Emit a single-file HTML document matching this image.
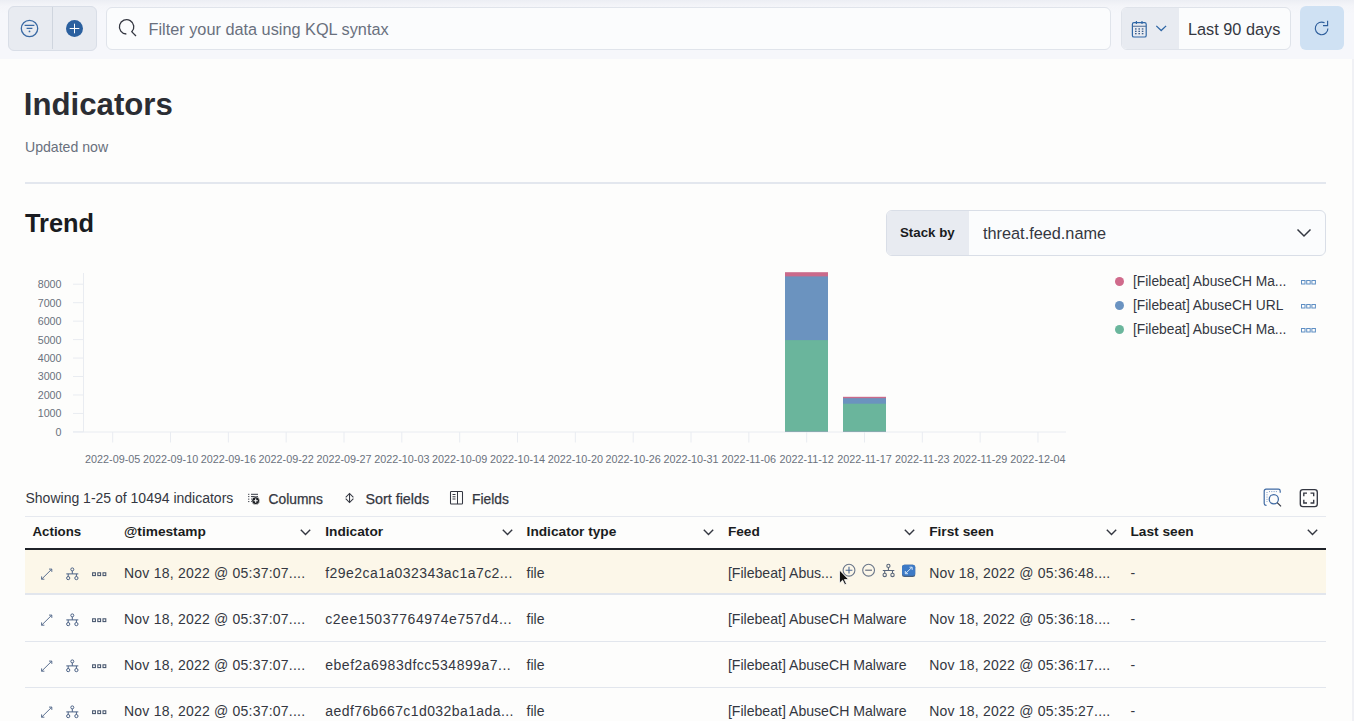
<!DOCTYPE html>
<html><head><meta charset="utf-8">
<style>
*{box-sizing:border-box;margin:0;padding:0}
html,body{width:1354px;height:721px;overflow:hidden;background:#fdfdfc;font-family:"Liberation Sans",sans-serif;color:#343741}
.abs{position:absolute}
.t{position:absolute;white-space:nowrap;line-height:1}
#topbar{position:absolute;left:0;top:0;width:1354px;height:59px;background:linear-gradient(#eceef4 0px,#f4f5f9 6px,#f6f7fb 14px)}
#btngrp{left:8px;top:6px;width:89px;height:45px;background:#e8ebf1;border:1px solid #d9dee7;border-radius:6px}
#btngrp .div{position:absolute;left:43px;top:0;width:1px;height:42px;background:#cfd5de}
#search{left:106px;top:7px;width:1005px;height:43px;background:#fbfcfd;border:1px solid #e0e4eb;border-radius:6px}
#datep{left:1121px;top:7px;width:170px;height:43px;background:#fbfcfd;border:1px solid #dfe3ea;border-radius:6px;overflow:hidden}
#datep .pre{position:absolute;left:0;top:0;width:57px;height:43px;background:#e8ebf1}
#refresh{left:1300px;top:6px;width:44px;height:44px;background:#cfe1f3;border-radius:6px}
#hr{left:25px;top:182px;width:1301px;height:2px;background:#e3e7ee}
#stack{left:886px;top:210px;width:440px;height:46px;background:#fbfcfd;border:1px solid #d9dee7;border-radius:6px;overflow:hidden}
#stack .pre{position:absolute;left:0;top:0;width:82px;height:46px;background:#e8ebf1}
.ldot{position:absolute;width:9px;height:9px;border-radius:50%}
</style></head>
<body>
<div id="topbar"></div>
<div id="btngrp" class="abs"><div class="div"></div>
  <svg class="abs" style="left:11.2px;top:11.6px" width="19" height="19" viewBox="0 0 19 19"><circle cx="9.5" cy="9.5" r="8.2" fill="none" stroke="#3a6aa4" stroke-width="1.3"/><path d="M4.6 6.4h9.8M6.6 9.4h5.8" stroke="#3a6aa4" stroke-width="1.2"/><circle cx="9.5" cy="12.4" r="0.9" fill="#3a6aa4"/></svg>
  <svg class="abs" style="left:55.8px;top:11.6px" width="19" height="19" viewBox="0 0 19 19"><circle cx="9.5" cy="9.5" r="8.5" fill="#2b609f"/><path d="M9.5 4.7v9.6M4.7 9.5h9.6" stroke="#fff" stroke-width="1"/></svg>
</div>
<div id="search" class="abs">
  <svg class="abs" style="left:0;top:0" width="40" height="40" viewBox="0 0 40 40"><path d="M24.78 23.80A7.2 7.2 0 1 0 19.35 26.00" fill="none" stroke="#343741" stroke-width="1.3"/><path d="M24.38 23.40L28.98 28.00" stroke="#343741" stroke-width="1.3"/></svg>
  <div class="t" style="left:41.5px;top:13px;font-size:16.3px;color:#69707d">Filter your data using KQL syntax</div>
</div>
<div id="datep" class="abs"><div class="pre"></div>
  <svg class="abs" style="left:0;top:0" width="56" height="43" viewBox="1122 8 56 43"><rect x="1132.4" y="22.6" width="13.8" height="14.4" rx="1.6" fill="none" stroke="#2f67a6" stroke-width="1.2"/><path d="M1132.4 26.3h13.8" stroke="#4a6a94" stroke-width="1.1"/><path d="M1136.4 21v3M1142 21v3" stroke="#2f67a6" stroke-width="1.2"/><g fill="#3d5f8d"><rect x="1135" y="28.3" width="1.6" height="1.3"/><rect x="1138.4" y="28.3" width="1.6" height="1.3"/><rect x="1141.8" y="28.3" width="1.6" height="1.3"/><rect x="1135" y="30.7" width="1.6" height="1.3"/><rect x="1138.4" y="30.7" width="1.6" height="1.3"/><rect x="1141.8" y="30.7" width="1.6" height="1.3"/><rect x="1135" y="33" width="1.6" height="1.3"/><rect x="1138.4" y="33" width="1.6" height="1.3"/><rect x="1141.8" y="33" width="1.6" height="1.3"/></g>
<path d="M1156.3 25.9l4.9 4.6 4.9-4.6" fill="none" stroke="#2f67a6" stroke-width="1.3"/></svg>
  <div class="t" style="left:66px;top:13px;font-size:16.3px;color:#343741">Last 90 days</div>
</div>
<div id="refresh" class="abs">
  <svg class="abs" style="left:0;top:0" width="44" height="44" viewBox="1300 6 44 44"><path d="M1327.90 28.40A6.3 6.3 0 1 1 1324.56 22.84" fill="none" stroke="#2f5f9c" stroke-width="1.15"/><path d="M1327.6 20.8v4.8h-4.6" fill="none" stroke="#2f5f9c" stroke-width="1.15"/></svg>
</div>

<div class="t" style="left:23.8px;top:89px;font-size:31.2px;font-weight:700;color:#2b2d33">Indicators</div>
<div class="t" style="left:25px;top:140px;font-size:14.1px;color:#69707d">Updated now</div>
<div id="hr" class="abs"></div>
<div class="t" style="left:25px;top:211px;font-size:25.4px;font-weight:700;color:#1a1c21">Trend</div>

<div id="stack" class="abs"><div class="pre"></div>
  <div class="t" style="left:13px;top:14.5px;font-size:13.3px;font-weight:700;color:#1a1c21">Stack by</div>
  <div class="t" style="left:96px;top:14px;font-size:16.3px;color:#343741">threat.feed.name</div>
  <svg class="abs" style="left:409px;top:17px" width="16" height="10" viewBox="0 0 16 10"><path d="M1.5 1.5l6.5 6.5 6.5-6.5" fill="none" stroke="#343741" stroke-width="1.5"/></svg>
</div>

<!-- legend -->
<div class="ldot" style="left:1115px;top:277px;background:#d06a8b"></div>
<div class="ldot" style="left:1115px;top:301px;background:#6a93c1"></div>
<div class="ldot" style="left:1115px;top:325px;background:#6ab69c"></div>
<div class="t" style="left:1133px;top:274.5px;font-size:13.8px;color:#343741">[Filebeat] AbuseCH Ma...</div>
<div class="t" style="left:1133px;top:298.5px;font-size:13.8px;color:#343741">[Filebeat] AbuseCH URL</div>
<div class="t" style="left:1133px;top:322.5px;font-size:13.8px;color:#343741">[Filebeat] AbuseCH Ma...</div>
<svg class="abs" style="left:1301px;top:280px" width="15" height="5" viewBox="0 0 15 5"><g fill="none" stroke="#5f8fc4" stroke-width="1"><rect x="0.5" y="0.5" width="3.5" height="3.5"/><rect x="5.7" y="0.5" width="3.5" height="3.5"/><rect x="10.9" y="0.5" width="3.5" height="3.5"/></g></svg>
<svg class="abs" style="left:1301px;top:304px" width="15" height="5" viewBox="0 0 15 5"><g fill="none" stroke="#5f8fc4" stroke-width="1"><rect x="0.5" y="0.5" width="3.5" height="3.5"/><rect x="5.7" y="0.5" width="3.5" height="3.5"/><rect x="10.9" y="0.5" width="3.5" height="3.5"/></g></svg>
<svg class="abs" style="left:1301px;top:328px" width="15" height="5" viewBox="0 0 15 5"><g fill="none" stroke="#5f8fc4" stroke-width="1"><rect x="0.5" y="0.5" width="3.5" height="3.5"/><rect x="5.7" y="0.5" width="3.5" height="3.5"/><rect x="10.9" y="0.5" width="3.5" height="3.5"/></g></svg>

<!-- CHART -->
<div id="chart"><svg class="abs" style="left:0;top:260px" width="1100" height="215" viewBox="0 260 1100 215" font-family="Liberation Sans" >
<line x1="73" y1="431.90" x2="83.5" y2="431.90" stroke="#e9ecf1" stroke-width="1"/>
<text x="61.5" y="435.80" text-anchor="end" font-size="10.7" fill="#6a717d">0</text>
<line x1="73" y1="413.44" x2="83.5" y2="413.44" stroke="#e9ecf1" stroke-width="1"/>
<text x="61.5" y="417.34" text-anchor="end" font-size="10.7" fill="#6a717d">1000</text>
<line x1="73" y1="394.98" x2="83.5" y2="394.98" stroke="#e9ecf1" stroke-width="1"/>
<text x="61.5" y="398.88" text-anchor="end" font-size="10.7" fill="#6a717d">2000</text>
<line x1="73" y1="376.52" x2="83.5" y2="376.52" stroke="#e9ecf1" stroke-width="1"/>
<text x="61.5" y="380.42" text-anchor="end" font-size="10.7" fill="#6a717d">3000</text>
<line x1="73" y1="358.06" x2="83.5" y2="358.06" stroke="#e9ecf1" stroke-width="1"/>
<text x="61.5" y="361.96" text-anchor="end" font-size="10.7" fill="#6a717d">4000</text>
<line x1="73" y1="339.60" x2="83.5" y2="339.60" stroke="#e9ecf1" stroke-width="1"/>
<text x="61.5" y="343.50" text-anchor="end" font-size="10.7" fill="#6a717d">5000</text>
<line x1="73" y1="321.14" x2="83.5" y2="321.14" stroke="#e9ecf1" stroke-width="1"/>
<text x="61.5" y="325.04" text-anchor="end" font-size="10.7" fill="#6a717d">6000</text>
<line x1="73" y1="302.68" x2="83.5" y2="302.68" stroke="#e9ecf1" stroke-width="1"/>
<text x="61.5" y="306.58" text-anchor="end" font-size="10.7" fill="#6a717d">7000</text>
<line x1="73" y1="284.22" x2="83.5" y2="284.22" stroke="#e9ecf1" stroke-width="1"/>
<text x="61.5" y="288.12" text-anchor="end" font-size="10.7" fill="#6a717d">8000</text>
<line x1="83.5" y1="273" x2="83.5" y2="432" stroke="#e9ecf1" stroke-width="1"/>
<line x1="73" y1="432" x2="1066" y2="432" stroke="#e9ecf1" stroke-width="1"/>
<line x1="112.70" y1="432" x2="112.70" y2="442.5" stroke="#e9ecf1" stroke-width="1"/>
<text x="112.70" y="462.8" text-anchor="middle" font-size="10.8" fill="#6a717d">2022-09-05</text>
<line x1="170.53" y1="432" x2="170.53" y2="442.5" stroke="#e9ecf1" stroke-width="1"/>
<text x="170.53" y="462.8" text-anchor="middle" font-size="10.8" fill="#6a717d">2022-09-10</text>
<line x1="228.36" y1="432" x2="228.36" y2="442.5" stroke="#e9ecf1" stroke-width="1"/>
<text x="228.36" y="462.8" text-anchor="middle" font-size="10.8" fill="#6a717d">2022-09-16</text>
<line x1="286.19" y1="432" x2="286.19" y2="442.5" stroke="#e9ecf1" stroke-width="1"/>
<text x="286.19" y="462.8" text-anchor="middle" font-size="10.8" fill="#6a717d">2022-09-22</text>
<line x1="344.02" y1="432" x2="344.02" y2="442.5" stroke="#e9ecf1" stroke-width="1"/>
<text x="344.02" y="462.8" text-anchor="middle" font-size="10.8" fill="#6a717d">2022-09-27</text>
<line x1="401.85" y1="432" x2="401.85" y2="442.5" stroke="#e9ecf1" stroke-width="1"/>
<text x="401.85" y="462.8" text-anchor="middle" font-size="10.8" fill="#6a717d">2022-10-03</text>
<line x1="459.68" y1="432" x2="459.68" y2="442.5" stroke="#e9ecf1" stroke-width="1"/>
<text x="459.68" y="462.8" text-anchor="middle" font-size="10.8" fill="#6a717d">2022-10-09</text>
<line x1="517.51" y1="432" x2="517.51" y2="442.5" stroke="#e9ecf1" stroke-width="1"/>
<text x="517.51" y="462.8" text-anchor="middle" font-size="10.8" fill="#6a717d">2022-10-14</text>
<line x1="575.34" y1="432" x2="575.34" y2="442.5" stroke="#e9ecf1" stroke-width="1"/>
<text x="575.34" y="462.8" text-anchor="middle" font-size="10.8" fill="#6a717d">2022-10-20</text>
<line x1="633.17" y1="432" x2="633.17" y2="442.5" stroke="#e9ecf1" stroke-width="1"/>
<text x="633.17" y="462.8" text-anchor="middle" font-size="10.8" fill="#6a717d">2022-10-26</text>
<line x1="691.00" y1="432" x2="691.00" y2="442.5" stroke="#e9ecf1" stroke-width="1"/>
<text x="691.00" y="462.8" text-anchor="middle" font-size="10.8" fill="#6a717d">2022-10-31</text>
<line x1="748.83" y1="432" x2="748.83" y2="442.5" stroke="#e9ecf1" stroke-width="1"/>
<text x="748.83" y="462.8" text-anchor="middle" font-size="10.8" fill="#6a717d">2022-11-06</text>
<line x1="806.66" y1="432" x2="806.66" y2="442.5" stroke="#e9ecf1" stroke-width="1"/>
<text x="806.66" y="462.8" text-anchor="middle" font-size="10.8" fill="#6a717d">2022-11-12</text>
<line x1="864.49" y1="432" x2="864.49" y2="442.5" stroke="#e9ecf1" stroke-width="1"/>
<text x="864.49" y="462.8" text-anchor="middle" font-size="10.8" fill="#6a717d">2022-11-17</text>
<line x1="922.32" y1="432" x2="922.32" y2="442.5" stroke="#e9ecf1" stroke-width="1"/>
<text x="922.32" y="462.8" text-anchor="middle" font-size="10.8" fill="#6a717d">2022-11-23</text>
<line x1="980.15" y1="432" x2="980.15" y2="442.5" stroke="#e9ecf1" stroke-width="1"/>
<text x="980.15" y="462.8" text-anchor="middle" font-size="10.8" fill="#6a717d">2022-11-29</text>
<line x1="1037.98" y1="432" x2="1037.98" y2="442.5" stroke="#e9ecf1" stroke-width="1"/>
<text x="1037.98" y="462.8" text-anchor="middle" font-size="10.8" fill="#6a717d">2022-12-04</text>
<rect x="785" y="272.2" width="43" height="159.3" fill="#ca6a8b"/><rect x="785" y="276.4" width="43" height="155.10000000000002" fill="#6b93bf"/><rect x="785" y="340.1" width="43" height="91.39999999999998" fill="#6ab59c"/>
<rect x="843" y="396.8" width="43" height="34.69999999999999" fill="#ca6a8b"/><rect x="843" y="398.2" width="43" height="33.30000000000001" fill="#6b93bf"/><rect x="843" y="403.7" width="43" height="27.80000000000001" fill="#6ab59c"/>
</svg></div>

<!-- TABLE -->
<div id="table"><div class="t" style="left:25.5px;top:490.7px;font-size:14px;color:#343741">Showing 1-25 of 10494 indicators</div>
<svg class="abs" style="left:242px;top:486px" width="24" height="22" viewBox="242 486 24 22"><g fill="#343741"><rect x="248.2" y="493.8" width="1.1" height="1.1"/><rect x="248.2" y="496" width="1.1" height="1.1"/><rect x="248.2" y="498.6" width="1.1" height="1.1"/><rect x="248.2" y="501" width="1.1" height="1.1"/></g><path d="M251 494.3h7M251 496.6h7M251 499.1h2M251 501.5h1" stroke="#343741" stroke-width="1"/><circle cx="255.7" cy="500.7" r="3.9" fill="#1a1c21" stroke="#fdfdfc" stroke-width="0.6"/><path d="M255.7 498.6v4.2M253.6 500.7h4.2" stroke="#fff" stroke-width="1.1"/></svg>
<div class="t" style="left:268.5px;top:492.5px;font-size:13.8px;color:#343741;-webkit-text-stroke:0.25px #343741">Columns</div>
<svg class="abs" style="left:340px;top:486px" width="20" height="22" viewBox="340 486 20 22"><path d="M345.7 497.3l3.85-3.85 3.85 3.85M345.7 498.7l3.85 3.85 3.85-3.85M349.55 494v8" fill="none" stroke="#343741" stroke-width="1.05"/></svg>
<div class="t" style="left:365.5px;top:491.6px;font-size:14.3px;color:#343741;-webkit-text-stroke:0.25px #343741">Sort fields</div>
<svg class="abs" style="left:446px;top:486px" width="20" height="22" viewBox="446 486 20 22"><rect x="450.5" y="491.5" width="12" height="12.5" rx="0.8" fill="none" stroke="#343741" stroke-width="1.05"/><path d="M457.5 491.5v12.5M452.5 494.5h3M452.5 496.8h3M452.5 499h3" stroke="#343741" stroke-width="1"/></svg>
<div class="t" style="left:472px;top:492.5px;font-size:13.8px;color:#343741;-webkit-text-stroke:0.25px #343741">Fields</div>
<svg class="abs" style="left:1263px;top:488px" width="20" height="20" viewBox="0 0 20 20"><path d="M3.5 17.3H3a1.8 1.8 0 0 1-1.8-1.8V3A1.8 1.8 0 0 1 3 1.2h12.4A1.8 1.8 0 0 1 17.2 3v1.8" fill="none" stroke="#3f6aa3" stroke-width="1.2"/><path d="M4 4v10M6 3.6h9" stroke="#6d8fbf" stroke-width="0.9" stroke-dasharray="1 1.3"/><circle cx="10.8" cy="11.2" r="4.6" fill="none" stroke="#3f6aa3" stroke-width="1.25"/><path d="M14.2 14.6l3.8 3.8" stroke="#343741" stroke-width="1.25"/></svg>
<svg class="abs" style="left:1299px;top:488px" width="20" height="20" viewBox="0 0 20 20"><rect x="1.3" y="1.6" width="17" height="17" rx="2.6" fill="none" stroke="#343741" stroke-width="1.35"/><path d="M4.8 8.3V5.1H8M11.5 5.1h3.2v3.2M14.7 11.8v3.2h-3.2M8 15H4.8v-3.2" fill="none" stroke="#343741" stroke-width="1.35"/></svg>
<div class="abs" style="left:25px;top:515.5px;width:1301px;height:1.5px;background:#e6e9ef"></div>
<div class="abs" style="left:25px;top:547.5px;width:1301px;height:2px;background:#1f2228"></div>
<div class="t" style="left:32.5px;top:525px;font-size:13.3px;font-weight:700;color:#1a1c21">Actions</div>
<div class="t" style="left:124.0px;top:525px;font-size:13.7px;font-weight:700;color:#1a1c21">@timestamp</div>
<svg class="abs" style="left:300.4px;top:529px" width="11" height="7" viewBox="0 0 11 7"><path d="M0.8 0.8l4.7 4.7 4.7-4.7" fill="none" stroke="#343741" stroke-width="1.4"/></svg>
<div class="t" style="left:325.3px;top:525px;font-size:13.7px;font-weight:700;color:#1a1c21">Indicator</div>
<svg class="abs" style="left:501.7px;top:529px" width="11" height="7" viewBox="0 0 11 7"><path d="M0.8 0.8l4.7 4.7 4.7-4.7" fill="none" stroke="#343741" stroke-width="1.4"/></svg>
<div class="t" style="left:526.6px;top:525px;font-size:13.7px;font-weight:700;color:#1a1c21">Indicator type</div>
<svg class="abs" style="left:703.0px;top:529px" width="11" height="7" viewBox="0 0 11 7"><path d="M0.8 0.8l4.7 4.7 4.7-4.7" fill="none" stroke="#343741" stroke-width="1.4"/></svg>
<div class="t" style="left:727.9px;top:525px;font-size:13.7px;font-weight:700;color:#1a1c21">Feed</div>
<svg class="abs" style="left:904.3px;top:529px" width="11" height="7" viewBox="0 0 11 7"><path d="M0.8 0.8l4.7 4.7 4.7-4.7" fill="none" stroke="#343741" stroke-width="1.4"/></svg>
<div class="t" style="left:929.2px;top:525px;font-size:13.7px;font-weight:700;color:#1a1c21">First seen</div>
<svg class="abs" style="left:1105.6px;top:529px" width="11" height="7" viewBox="0 0 11 7"><path d="M0.8 0.8l4.7 4.7 4.7-4.7" fill="none" stroke="#343741" stroke-width="1.4"/></svg>
<div class="t" style="left:1130.5px;top:525px;font-size:13.7px;font-weight:700;color:#1a1c21">Last seen</div>
<svg class="abs" style="left:1306.9px;top:529px" width="11" height="7" viewBox="0 0 11 7"><path d="M0.8 0.8l4.7 4.7 4.7-4.7" fill="none" stroke="#343741" stroke-width="1.4"/></svg>
<div class="abs" style="left:25px;top:549.5px;width:1301px;height:44px;background:#fcf7e9"></div>
<div class="abs" style="left:25px;top:593px;width:1301px;height:2px;background:#e2e6ed"></div>
<div class="abs" style="left:25px;top:641px;width:1301px;height:1px;background:#e2e6ed"></div>
<div class="abs" style="left:25px;top:687px;width:1301px;height:1px;background:#e2e6ed"></div>
<svg class="abs" style="left:39px;top:565.7px" width="70" height="16" viewBox="0 0 70 16">
<path d="M2.6 13.2L12.8 3.1M2.6 10.4v2.8h2.8M10 3.1h2.8v2.8" fill="none" stroke="#5a6f8f" stroke-width="1"/>
<g fill="none" stroke="#4b6185" stroke-width="1"><circle cx="33.3" cy="3.4" r="1.5"/><path d="M27.3 7.9h12M33.3 4.9v3"/><circle cx="29.2" cy="12.1" r="1.6"/><circle cx="37.4" cy="12.1" r="1.6"/><path d="M29.2 7.9v2.6M37.4 7.9v2.6"/></g>
<g fill="none" stroke="#44536b" stroke-width="1.05"><rect x="53.6" y="6.8" width="2.8" height="2.8"/><rect x="58.8" y="6.8" width="2.8" height="2.8"/><rect x="64" y="6.8" width="2.8" height="2.8"/></g>
</svg>
<div class="t" style="left:124.0px;top:565.75px;font-size:14px;color:#343741;letter-spacing:0.22px;">Nov 18, 2022 @ 05:37:07....</div>
<div class="t" style="left:325.3px;top:565.75px;font-size:14px;color:#343741;letter-spacing:0.43px;">f29e2ca1a032343ac1a7c2...</div>
<div class="t" style="left:526.6px;top:565.75px;font-size:14px;color:#343741;">file</div>
<div class="t" style="left:727.9px;top:565.75px;font-size:14.1px;color:#343741;">[Filebeat] Abus...</div>
<div class="t" style="left:929.2px;top:565.75px;font-size:14px;color:#343741;letter-spacing:0.22px;">Nov 18, 2022 @ 05:36:48....</div>
<div class="t" style="left:1130.5px;top:565.75px;font-size:14px;color:#343741;">-</div>
<svg class="abs" style="left:39px;top:612.1px" width="70" height="16" viewBox="0 0 70 16">
<path d="M2.6 13.2L12.8 3.1M2.6 10.4v2.8h2.8M10 3.1h2.8v2.8" fill="none" stroke="#5a6f8f" stroke-width="1"/>
<g fill="none" stroke="#4b6185" stroke-width="1"><circle cx="33.3" cy="3.4" r="1.5"/><path d="M27.3 7.9h12M33.3 4.9v3"/><circle cx="29.2" cy="12.1" r="1.6"/><circle cx="37.4" cy="12.1" r="1.6"/><path d="M29.2 7.9v2.6M37.4 7.9v2.6"/></g>
<g fill="none" stroke="#44536b" stroke-width="1.05"><rect x="53.6" y="6.8" width="2.8" height="2.8"/><rect x="58.8" y="6.8" width="2.8" height="2.8"/><rect x="64" y="6.8" width="2.8" height="2.8"/></g>
</svg>
<div class="t" style="left:124.0px;top:612.15px;font-size:14px;color:#343741;letter-spacing:0.22px;">Nov 18, 2022 @ 05:37:07....</div>
<div class="t" style="left:325.3px;top:612.15px;font-size:14px;color:#343741;letter-spacing:0.52px;">c2ee15037764974e757d4...</div>
<div class="t" style="left:526.6px;top:612.15px;font-size:14px;color:#343741;">file</div>
<div class="t" style="left:727.9px;top:612.15px;font-size:14.1px;color:#343741;">[Filebeat] AbuseCH Malware</div>
<div class="t" style="left:929.2px;top:612.15px;font-size:14px;color:#343741;letter-spacing:0.22px;">Nov 18, 2022 @ 05:36:18....</div>
<div class="t" style="left:1130.5px;top:612.15px;font-size:14px;color:#343741;">-</div>
<svg class="abs" style="left:39px;top:658.1px" width="70" height="16" viewBox="0 0 70 16">
<path d="M2.6 13.2L12.8 3.1M2.6 10.4v2.8h2.8M10 3.1h2.8v2.8" fill="none" stroke="#5a6f8f" stroke-width="1"/>
<g fill="none" stroke="#4b6185" stroke-width="1"><circle cx="33.3" cy="3.4" r="1.5"/><path d="M27.3 7.9h12M33.3 4.9v3"/><circle cx="29.2" cy="12.1" r="1.6"/><circle cx="37.4" cy="12.1" r="1.6"/><path d="M29.2 7.9v2.6M37.4 7.9v2.6"/></g>
<g fill="none" stroke="#44536b" stroke-width="1.05"><rect x="53.6" y="6.8" width="2.8" height="2.8"/><rect x="58.8" y="6.8" width="2.8" height="2.8"/><rect x="64" y="6.8" width="2.8" height="2.8"/></g>
</svg>
<div class="t" style="left:124.0px;top:658.15px;font-size:14px;color:#343741;letter-spacing:0.22px;">Nov 18, 2022 @ 05:37:07....</div>
<div class="t" style="left:325.3px;top:658.15px;font-size:14px;color:#343741;letter-spacing:0.49px;">ebef2a6983dfcc534899a7...</div>
<div class="t" style="left:526.6px;top:658.15px;font-size:14px;color:#343741;">file</div>
<div class="t" style="left:727.9px;top:658.15px;font-size:14.1px;color:#343741;">[Filebeat] AbuseCH Malware</div>
<div class="t" style="left:929.2px;top:658.15px;font-size:14px;color:#343741;letter-spacing:0.22px;">Nov 18, 2022 @ 05:36:17....</div>
<div class="t" style="left:1130.5px;top:658.15px;font-size:14px;color:#343741;">-</div>
<svg class="abs" style="left:39px;top:704.1px" width="70" height="16" viewBox="0 0 70 16">
<path d="M2.6 13.2L12.8 3.1M2.6 10.4v2.8h2.8M10 3.1h2.8v2.8" fill="none" stroke="#5a6f8f" stroke-width="1"/>
<g fill="none" stroke="#4b6185" stroke-width="1"><circle cx="33.3" cy="3.4" r="1.5"/><path d="M27.3 7.9h12M33.3 4.9v3"/><circle cx="29.2" cy="12.1" r="1.6"/><circle cx="37.4" cy="12.1" r="1.6"/><path d="M29.2 7.9v2.6M37.4 7.9v2.6"/></g>
<g fill="none" stroke="#44536b" stroke-width="1.05"><rect x="53.6" y="6.8" width="2.8" height="2.8"/><rect x="58.8" y="6.8" width="2.8" height="2.8"/><rect x="64" y="6.8" width="2.8" height="2.8"/></g>
</svg>
<div class="t" style="left:124.0px;top:704.15px;font-size:14px;color:#343741;letter-spacing:0.22px;">Nov 18, 2022 @ 05:37:07....</div>
<div class="t" style="left:325.3px;top:704.15px;font-size:14px;color:#343741;letter-spacing:0.41px;">aedf76b667c1d032ba1ada...</div>
<div class="t" style="left:526.6px;top:704.15px;font-size:14px;color:#343741;">file</div>
<div class="t" style="left:727.9px;top:704.15px;font-size:14.1px;color:#343741;">[Filebeat] AbuseCH Malware</div>
<div class="t" style="left:929.2px;top:704.15px;font-size:14px;color:#343741;letter-spacing:0.22px;">Nov 18, 2022 @ 05:35:27....</div>
<div class="t" style="left:1130.5px;top:704.15px;font-size:14px;color:#343741;">-</div>
<svg class="abs" style="left:836px;top:560px" width="84" height="28" viewBox="836 560 84 28">
<circle cx="849" cy="570.2" r="5.9" fill="none" stroke="#6b778a" stroke-width="1.1"/><path d="M849 566.8v6.8M845.6 570.2h6.8" stroke="#4d6a93" stroke-width="1.1"/>
<circle cx="868.6" cy="570.2" r="5.9" fill="none" stroke="#6b778a" stroke-width="1.1"/><path d="M865.2 570.2h6.8" stroke="#5d6678" stroke-width="1.1"/>
<g fill="none" stroke="#5a677b" stroke-width="1.1"><circle cx="888.4" cy="565.9" r="1.6"/><path d="M882.8 570.5h11.5M888.4 567.5v3M884.7 570.5v2.5M892.5 570.5v2.5"/><circle cx="884.7" cy="574.9" r="1.7"/><circle cx="892.5" cy="574.9" r="1.7"/></g>
<rect x="902" y="564.7" width="13.2" height="12.4" rx="2.5" fill="#48607e"/><rect x="902" y="564.7" width="13.2" height="11" rx="2.5" fill="#3d7ac6"/>
<path d="M905.5 573.5l6.5-6.2M905.3 571v2.7h2.7M909.5 567.2h2.7v2.7" fill="none" stroke="#cfe3f7" stroke-width="1"/>
<path d="M839.5 570v13.2l3.1-3 2.2 4.6 1.7-.8-2.1-4.4h4.3z" fill="#111" stroke="#fff" stroke-width="0.8"/>
</svg></div><!--endtable-->

<div class="abs" style="left:1352px;top:59px;width:2px;height:662px;background:#f0f1f5"></div>
</body></html>
